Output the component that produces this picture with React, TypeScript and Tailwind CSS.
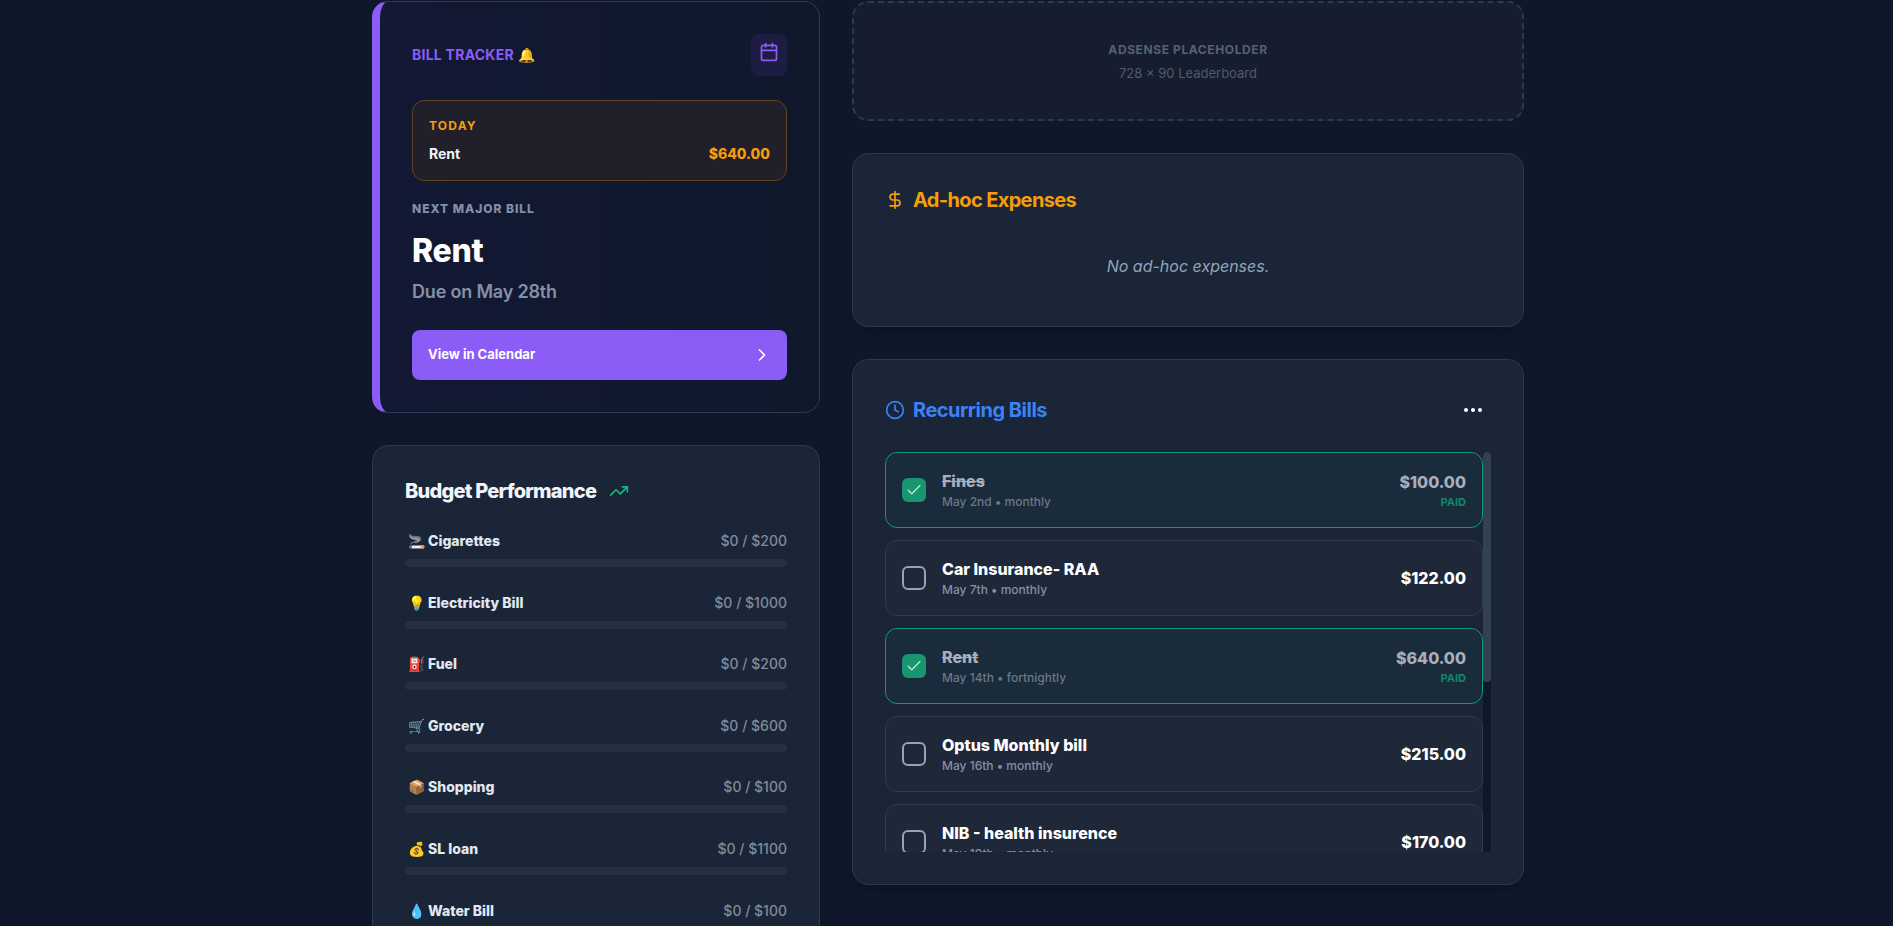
import { Calendar, ChevronRight, TrendingUp, DollarSign, Clock, MoreHorizontal, Check } from "lucide-react";

const budgets = [
  ["🚬", "Cigarettes", "$0 / $200"],
  ["💡", "Electricity Bill", "$0 / $1000"],
  ["⛽", "Fuel", "$0 / $200"],
  ["🛒", "Grocery", "$0 / $600"],
  ["📦", "Shopping", "$0 / $100"],
  ["💰", "SL loan", "$0 / $1100"],
  ["💧", "Water Bill", "$0 / $100"],
];

const bills = [
  { name: "Fines", sub: "May 2nd • monthly", amt: "$100.00", paid: true },
  { name: "Car Insurance- RAA", sub: "May 7th • monthly", amt: "$122.00", paid: false },
  { name: "Rent", sub: "May 14th • fortnightly", amt: "$640.00", paid: true },
  { name: "Optus Monthly bill", sub: "May 16th • monthly", amt: "$215.00", paid: false },
  { name: "NIB - health insurence", sub: "May 19th • monthly", amt: "$170.00", paid: false },
];

export default function App() {
  return (
    <div className="h-[926px] overflow-hidden bg-[#0f172a] font-['Inter',sans-serif] text-white">
      <div className="ml-[372px] flex w-[1152px] items-start gap-8 pt-px">
        <div className="flex w-[448px] flex-col gap-8">
          <section className="h-[412px] rounded-2xl border border-l-8 border-[#2c394e] border-l-[#8b5cf6] bg-gradient-to-r from-[#131834] to-[#0f182b] px-8 pt-8">
            <div className="flex items-start justify-between">
              <div className="flex h-[42px] items-center gap-1 text-sm font-bold tracking-[0.25px] text-[#8b5cf6]">
                <span>BILL TRACKER</span>
                <span className="text-sm">🔔</span>
              </div>
              <div className="flex h-[42px] w-9 justify-center rounded-lg bg-[#1d1d43] pt-2">
                <Calendar size={20} className="text-[#8b5cf6]" />
              </div>
            </div>
            <div className="mt-6 h-[81px] rounded-xl border border-[#5f4420] bg-[#211f2a] px-4 pt-[17px]">
              <div className="text-xs font-bold tracking-widest text-[#f59e0b]">TODAY</div>
              <div className="mt-2.5 flex items-center justify-between text-sm">
                <span className="font-bold text-[#f1f5f9]">Rent</span>
                <span className="font-extrabold text-[#f59e0b]">$640.00</span>
              </div>
            </div>
            <div className="mt-5 text-xs font-extrabold tracking-[0.08em] text-[#8390a6]">NEXT MAJOR BILL</div>
            <div className="mt-3.5 text-[32px] font-extrabold leading-10 tracking-[-0.01em] text-white">Rent</div>
            <div className="mt-[7px] text-lg font-semibold tracking-[-0.01em] text-[#8390a6]">Due on May 28th</div>
            <button className="mt-6 flex h-[50px] w-full items-center justify-between rounded-lg bg-[#8b5cf6] pl-4 pr-[15px] text-[13px] font-bold text-white">
              <span>View in Calendar</span>
              <ChevronRight size={20} />
            </button>
          </section>

          <section className="rounded-2xl border border-[#2c394e] bg-[#1a2537] p-8 pt-[31px] shadow-lg">
            <div className="flex h-7 items-center gap-[13px]">
              <h2 className="text-xl font-extrabold tracking-[-0.038em] text-[#f1f5f9]">Budget Performance</h2>
              <TrendingUp size={20} className="text-[#10b981]" />
            </div>
            <div className="mt-[26px] flex flex-col gap-[25.6px]">
              {budgets.map(([emoji, name, val]) => (
                <div key={name}>
                  <div className="flex h-5 items-center justify-between text-sm">
                    <div className="flex items-center">
                      <span className="flex w-[23px] justify-center text-sm">{emoji}</span>
                      <span className="font-extrabold text-[#e2e8f0]">{name}</span>
                    </div>
                    <span className="font-medium text-[#7f8b9d]">{val}</span>
                  </div>
                  <div className="mt-2 h-2 rounded-full bg-[#253040]" />
                </div>
              ))}
            </div>
          </section>
        </div>

        <div className="flex w-[672px] flex-col gap-8">
          <section className="flex h-[120px] flex-col items-center justify-center gap-[7px] rounded-2xl border-2 border-dashed border-[#2c394e] bg-[#151d2f]">
            <div className="text-xs font-bold tracking-wider text-[#566173]">ADSENSE PLACEHOLDER</div>
            <div className="text-[13px] leading-4 text-[#505b6d]">728 × 90 Leaderboard</div>
          </section>

          <section className="h-[174px] rounded-2xl border border-[#2c394e] bg-[#1a2537] px-8 pt-[32px] shadow-lg">
            <div className="flex h-7 items-center gap-2">
              <DollarSign size={20} className="text-[#f59e0b]" />
              <h2 className="text-xl font-bold tracking-[-0.032em] text-[#f59e0b]">Ad-hoc Expenses</h2>
            </div>
            <p className="mt-10 text-center text-base italic text-[#94a3b8]">No ad-hoc expenses.</p>
          </section>

          <section className="h-[526px] rounded-2xl border border-[#2c394e] bg-[#1a2537] px-8 pt-9 shadow-lg">
            <div className="flex h-7 items-center justify-between">
              <div className="flex items-center gap-2">
                <Clock size={20} className="text-[#3b82f6]" />
                <h2 className="text-xl font-bold tracking-tight text-[#3b82f6]">Recurring Bills</h2>
              </div>
              <MoreHorizontal size={24} className="mr-[6px] text-white" />
            </div>
            <div className="relative mt-7 h-[400px] overflow-hidden pr-2">
              <div className="absolute right-0 top-0 h-full w-2 bg-[#0f172a]">
                <div className="h-[230px] rounded-full bg-[#334155]" />
              </div>
              <div className="flex flex-col gap-3">
                {bills.map((b) => (
                  <div
                    key={b.name}
                    className={
                      b.paid
                        ? "flex h-[76px] shrink-0 items-center rounded-xl border border-[#10997a] bg-[#1a2b3b] px-4"
                        : "flex h-[76px] shrink-0 items-center rounded-xl border border-[#2f3b50] bg-[#1f2839] px-4"
                    }
                  >
                    {b.paid ? (
                      <div className="flex h-6 w-6 items-center justify-center rounded-md bg-[#17966f] text-[#cfe8df]">
                        <Check size={18} strokeWidth={1.5} />
                      </div>
                    ) : (
                      <div className="h-6 w-6 rounded-md border-2 border-[#94a3b8]" />
                    )}
                    <div className="ml-4 flex-1">
                      <div className={b.paid ? "mb-[2px] text-base font-extrabold leading-[22px] text-[#a8aeb9] line-through" : "mb-[2px] text-base font-extrabold leading-[22px] text-white"}>{b.name}</div>
                      <div className={b.paid ? "text-xs font-medium leading-4 text-[#6b7789]" : "text-xs font-medium leading-4 text-[#8390a6]"}>{b.sub}</div>
                    </div>
                    <div className="text-right">
                      <div className={b.paid ? "text-base font-extrabold leading-6 text-[#a8aeb9]" : "text-base font-extrabold leading-6 text-white"}>{b.amt}</div>
                      {b.paid && <div className="text-[11px] font-bold leading-4 text-[#0f8a66]">PAID</div>}
                    </div>
                  </div>
                ))}
              </div>
            </div>
          </section>
        </div>
      </div>
    </div>
  );
}
